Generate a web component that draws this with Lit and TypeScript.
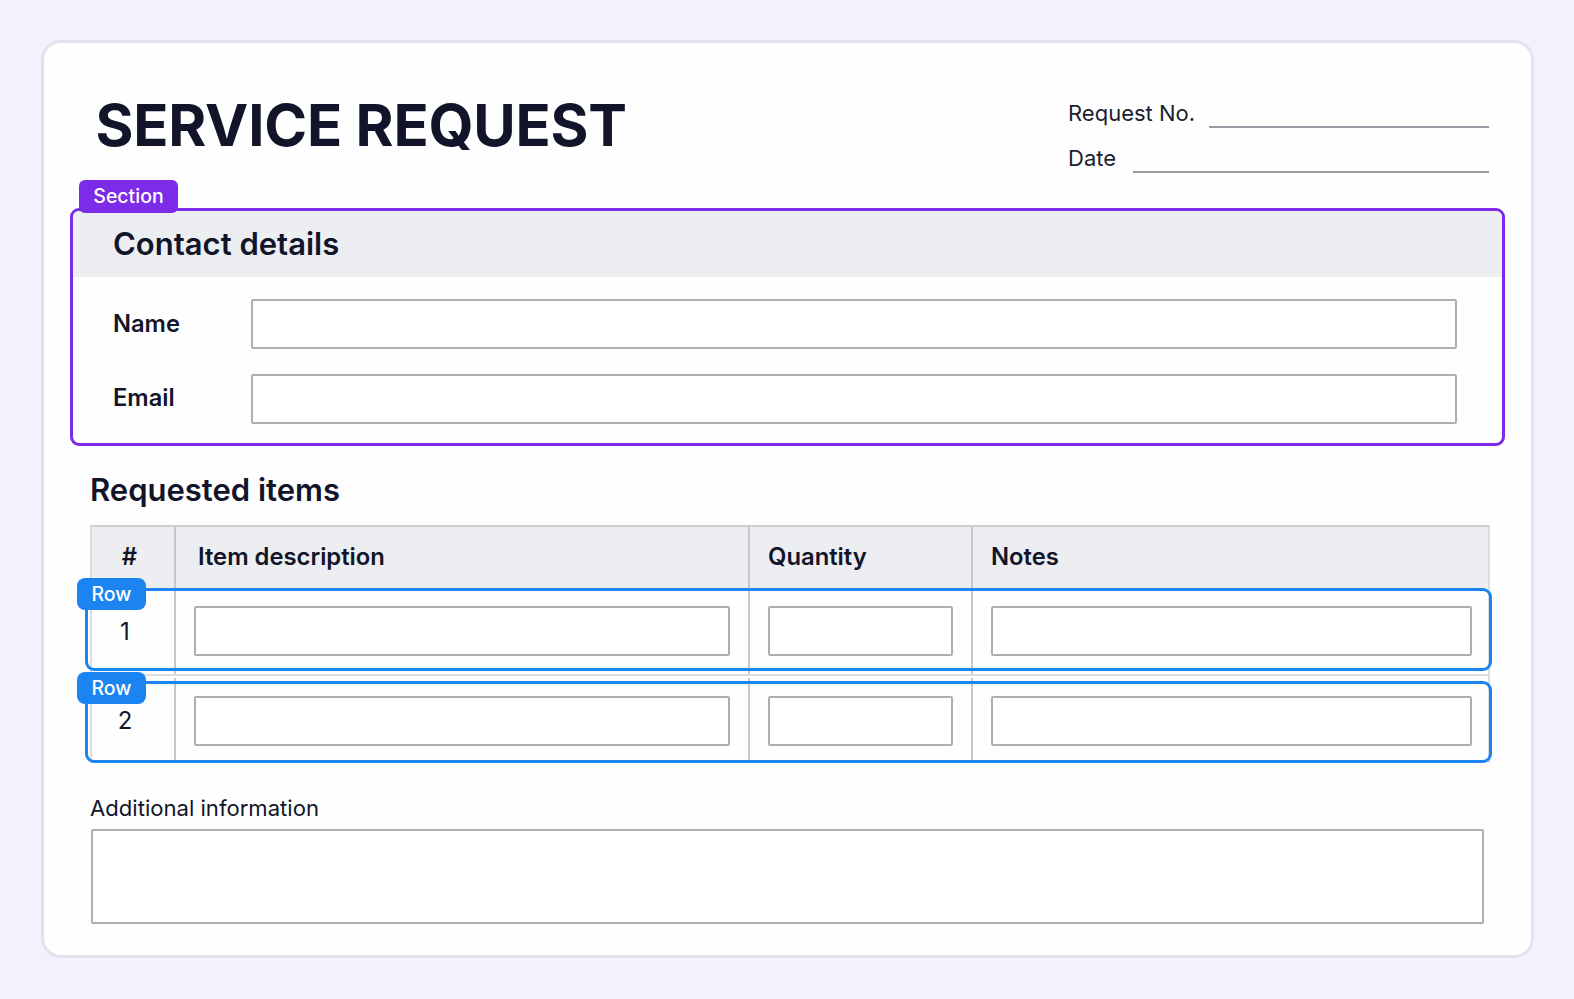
import { LitElement, html, css } from "lit";
import { customElement } from "lit/decorators.js";

@customElement("app-root")
export class AppRoot extends LitElement {
  static styles = css`
    :host { display: block; width: 1574px; height: 999px; background: #f1f2fd; font-family: Inter, "Liberation Sans", sans-serif; color: #12152a; box-sizing: border-box; padding: 40px 40px 41px 41px; overflow: hidden; }
    * { box-sizing: border-box; }
    .card { width: 100%; height: 100%; background: #fefefe; border: 3px solid #e2e3ec; border-radius: 20px; padding: 0 26px; display: flex; flex-direction: column; }
    .head { display: flex; justify-content: space-between; height: 165px; padding-left: 25.5px; padding-right: 16px; }
    h1 { margin: 50px 0 0; font-size: 58px; line-height: 64px; font-weight: 700; letter-spacing: -0.2px; color: #12152a; }
    .meta { width: 421px; padding-top: 55px; display: flex; flex-direction: column; gap: 15px; font-size: 22px; line-height: 30px; color: #1b1e30; }
    .meta div { display: flex; align-items: flex-end; gap: 14px; }
    .meta div:nth-child(2) { gap: 17px; }
    .meta i { flex: 1; height: 2px; background: #989ba3; margin-bottom: 0; }
    .section { position: relative; height: 238px; border: 3px solid #7c2be8; border-radius: 9px; }
    .tag { position: absolute; color: #fff; font-weight: 600; display: flex; align-items: center; justify-content: center; }
    .tag.s { left: 6px; top: -31px; width: 99px; height: 33px; padding-bottom: 2px; background: #7c2be8; border-radius: 6px; font-size: 19.5px; font-weight: 550; }
    .sec-h { height: 66px; background: #eceef1; padding: 0 0 2px 40px; display: flex; align-items: center; font-size: 31px; font-weight: 600; border-radius: 6px 6px 0 0; }
    .sec-b { padding: 22px 45px 0 40px; display: flex; flex-direction: column; gap: 25px; }
    .f { display: flex; align-items: center; font-size: 23.7px; font-weight: 600; }
    .f span { width: 138px; padding-bottom: 2px; }
    .f:last-child span { padding-bottom: 4px; }
    .inp { flex: 1; height: 50px; border: 2px solid #adafb5; border-radius: 2px; background: #fff; }
    h2 { margin: 24px 0 15px 20px; font-size: 31px; line-height: 40px; font-weight: 600; }
    .tbl { margin-left: 20px; margin-right: 15px; border-top: 2px solid #cdcfd4; border-left: 2px solid #dcdde1; border-right: 2px solid #dcdde1; }
    .r { display: grid; grid-template-columns: 84px 574px 223px 1fr; position: relative; }
    .r > div { border-right: 2px solid #c6c8cd; display: flex; align-items: center; }
    .r > div:last-child { border-right: 0; }
    .hd { height: 61px; background: #eceef1; font-size: 23.8px; font-weight: 600; }
    .hd > div { padding-bottom: 2px; }
    .hd .n { justify-content: center; padding-right: 7px; }
    .hd .d { padding-left: 22px; }
    .hd .q { padding-left: 18px; }
    .hd .no { padding-left: 18px; }
    .row { font-size: 24px; }
    .row1 { height: 88px; border-bottom: 2px solid #dcdde1; }
    .row2 { height: 87px; padding-top: 2px; }
    .row .n { justify-content: center; font-weight: 400; padding-right: 16px; }
    .row .inp { height: 50px; flex: 1; }
    .row .d { padding: 0 18px 0 18px; }
    .row .q { padding: 0 18px 0 18px; }
    .row .no { padding: 0 16px 0 18px; }
    .row::after { content: ""; position: absolute; box-sizing: border-box; left: -7px; right: -4px; border: 3px solid #1b84f0; border-radius: 9px; pointer-events: none; }
    .row1::after { top: 0; height: 83px; }
    .row2::after { top: 5px; height: 82px; }
    .tag.r1 { z-index: 2; left: -15px; width: 69px; height: 32px; background: #1b84f0; border-radius: 8px; font-size: 19.5px; font-weight: 500; }
    .row1 .r1 { top: -10px; }
    .row2 .r1 { top: -4px; }
    .lbl { margin: 30px 0 6px 20px; font-size: 22.1px; line-height: 30px; }
    .ta { margin-left: 21px; margin-right: 21px; height: 95px; border: 2px solid #adafb5; border-radius: 2px; background: #fff; }
  `;

  render() {
    const row = (n: number, c: string) => html`
      <div class="r row ${c}">
        <span class="tag r1">Row</span>
        <div class="n">${n}</div>
        <div class="d"><div class="inp"></div></div>
        <div class="q"><div class="inp"></div></div>
        <div class="no"><div class="inp"></div></div>
      </div>`;
    return html`
      <div class="card">
        <div class="head">
          <h1>SERVICE REQUEST</h1>
          <div class="meta">
            <div>Request No. <i></i></div>
            <div>Date <i></i></div>
          </div>
        </div>
        <div class="section">
          <span class="tag s">Section</span>
          <div class="sec-h">Contact details</div>
          <div class="sec-b">
            <div class="f"><span>Name</span><div class="inp"></div></div>
            <div class="f"><span>Email</span><div class="inp"></div></div>
          </div>
        </div>
        <h2>Requested items</h2>
        <div class="tbl">
          <div class="r hd">
            <div class="n">#</div><div class="d">Item description</div><div class="q">Quantity</div><div class="no">Notes</div>
          </div>
          ${row(1, "row1")}
          ${row(2, "row2")}
        </div>
        <div class="lbl">Additional information</div>
        <div class="ta"></div>
      </div>`;
  }
}
